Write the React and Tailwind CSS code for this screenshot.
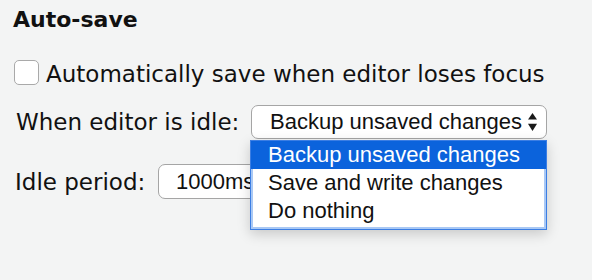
import React from "react";

const dv = { fontFamily: '"DejaVu Sans", Verdana, sans-serif' };
const ls = { fontFamily: '"Liberation Sans", Arial, sans-serif' };

function Arrows() {
  return (
    <svg width="9" height="18" viewBox="0 0 9 18" className="shrink-0">
      <path d="M4.5 0 L9 6.5 L0 6.5 Z" fill="#1a1a1a" />
      <path d="M0 10.7 L9 10.7 L4.5 18 Z" fill="#1a1a1a" />
    </svg>
  );
}

export default function App() {
  return (
    <div className="relative w-[592px] h-[280px] overflow-hidden bg-[#f3f4f4] text-[#111]">
      <div className="pt-[7px]">
        <div className="pl-[13px] h-[26px] leading-[26px] text-[22px] font-bold" style={dv}>
          Auto-save
        </div>

        <div className="mt-[27px] pl-[14px] flex items-start">
          <div className="w-[25px] h-[25px] rounded-[5px] border-[1.5px] border-[#a9a9a9] bg-white shrink-0" />
          <div className="ml-[7px] h-[28px] leading-[28px] text-[23px] whitespace-nowrap" style={dv}>
            Automatically save when editor loses focus
          </div>
        </div>

        <div className="mt-[17px] pl-[16px] flex items-center h-[34px]">
          <div className="w-[235px] h-[28px] leading-[28px] text-[23px] whitespace-nowrap" style={dv}>
            When editor is idle:
          </div>
          <div
            className="w-[296px] h-[34px] rounded-[7px] border border-[#a5a5a5] bg-white flex items-center justify-between pl-[18px] pr-[9px]"
            style={ls}
          >
            <span className="text-[22px] leading-[26px] whitespace-nowrap">Backup unsaved changes</span>
            <Arrows />
          </div>
        </div>

        <div className="mt-[25px] pl-[15px] flex items-center h-[35px]">
          <div className="w-[143px] h-[28px] leading-[28px] text-[23px] whitespace-nowrap" style={dv}>
            Idle period:
          </div>
          <div
            className="w-[150px] h-[35px] rounded-[7px] border border-[#a5a5a5] bg-white flex items-center pl-[17px]"
            style={ls}
          >
            <span className="text-[22px] leading-[26px] whitespace-nowrap">1000ms</span>
          </div>
        </div>
      </div>

      <div
        className="absolute left-[250px] top-[140px] w-[297px] h-[90px] border border-[#3b7ee4] bg-white pb-[4px] shadow-[inset_0_0_0_2px_#a9c8f4,0_4px_12px_rgba(0,0,0,0.18)]"
        style={ls}
      >
        <div className="h-[28px] leading-[28px] pl-[17px] text-[22px] bg-[#0b63dc] text-white whitespace-nowrap">
          Backup unsaved changes
        </div>
        <div className="h-[28px] leading-[28px] pl-[17px] text-[22px] text-[#111] whitespace-nowrap">
          Save and write changes
        </div>
        <div className="h-[28px] leading-[28px] pl-[17px] text-[22px] text-[#111] whitespace-nowrap">
          Do nothing
        </div>
      </div>
    </div>
  );
}
